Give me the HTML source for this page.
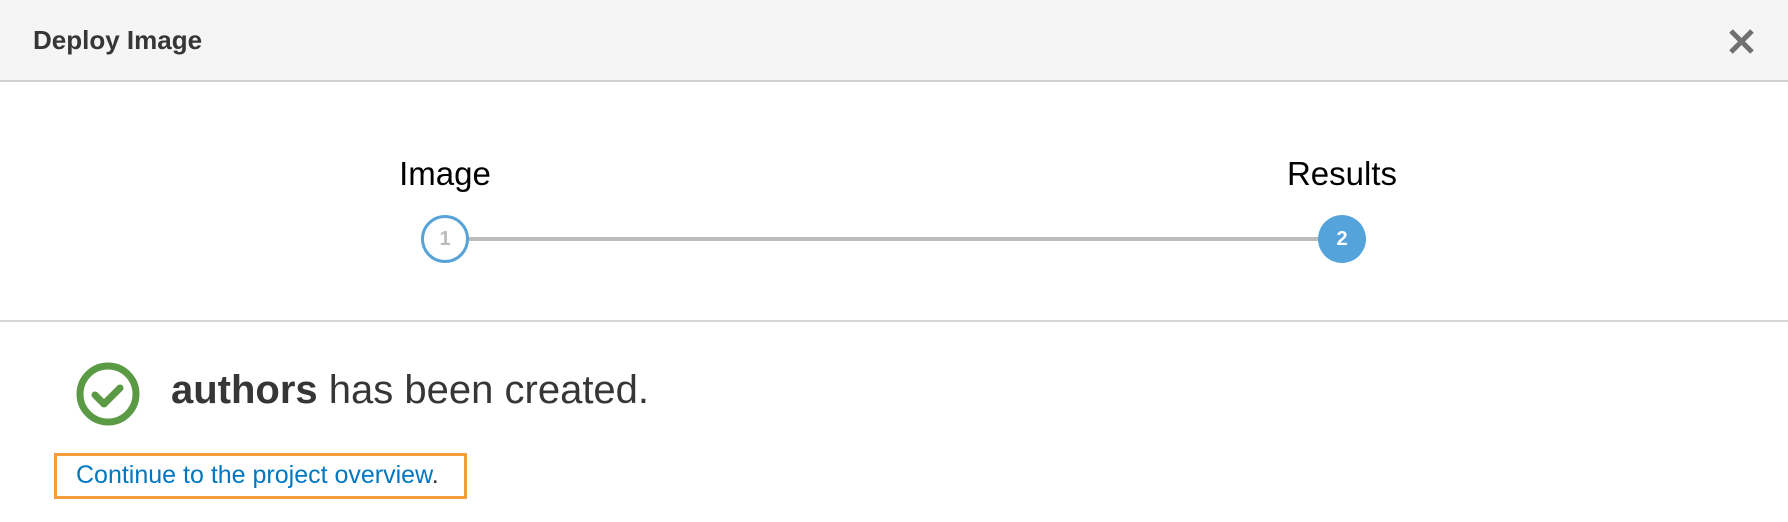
<!DOCTYPE html>
<html><head><style>
body{margin:0;width:1788px;height:522px;background:#fff;font-family:"Liberation Sans",sans-serif;position:relative;overflow:hidden}
.hdr{position:absolute;left:0;top:0;width:1788px;height:80px;background:#f5f5f5;border-bottom:2px solid #d1d1d1}
.ttl{position:absolute;left:33px;top:25px;font-size:26px;font-weight:bold;color:#363636}
.sep{position:absolute;left:0;top:320px;width:1788px;height:2px;background:#d6d6d6}
.lbl{position:absolute;top:155px;font-size:33px;color:#000;transform:translateX(-50%)}
.line{position:absolute;left:468px;top:237px;width:852px;height:4px;background:#bbb}
.c{position:absolute;width:48px;height:48px;border-radius:50%;box-sizing:border-box;text-align:center;line-height:44px;font-weight:bold;font-size:20px}
.msg{position:absolute;left:171px;top:368px;font-size:40px;color:#363636}
.box{position:absolute;left:54px;top:453px;width:413px;height:46px;box-sizing:border-box;border:3px solid #f39d3c}
.lnk{position:absolute;left:76px;top:461px;font-size:25px;color:#0077c0}
</style></head><body>
<div class="hdr"><div class="ttl">Deploy Image</div>
<svg style="position:absolute;left:1728px;top:28px" width="27" height="27" viewBox="0 0 27 27"><path d="M3 3L24 24M24 3L3 24" stroke="#707070" stroke-width="5"/></svg>
</div>
<div class="lbl" style="left:445px">Image</div>
<div class="lbl" style="left:1342px">Results</div>
<div class="line"></div>
<div class="c" style="left:421px;top:215px;background:#fff;border:3px solid #57a3d8;color:#bbb;line-height:42px">1</div>
<div class="c" style="left:1318px;top:215px;background:#54a3da;color:#fff;line-height:48px">2</div>
<div class="sep"></div>
<svg style="position:absolute;left:75px;top:361px" width="66" height="66" viewBox="0 0 66 66"><circle cx="33" cy="33" r="28" fill="none" stroke="#5a9a45" stroke-width="7"/><path d="M20 34L29 43L45 27" fill="none" stroke="#5a9a45" stroke-width="7" stroke-linecap="round" stroke-linejoin="round"/></svg>
<div class="msg"><b>authors</b> has been created.</div>
<div class="box"></div>
<div class="lnk">Continue to the project overview<span style="color:#363636">.</span></div>
</body></html>
